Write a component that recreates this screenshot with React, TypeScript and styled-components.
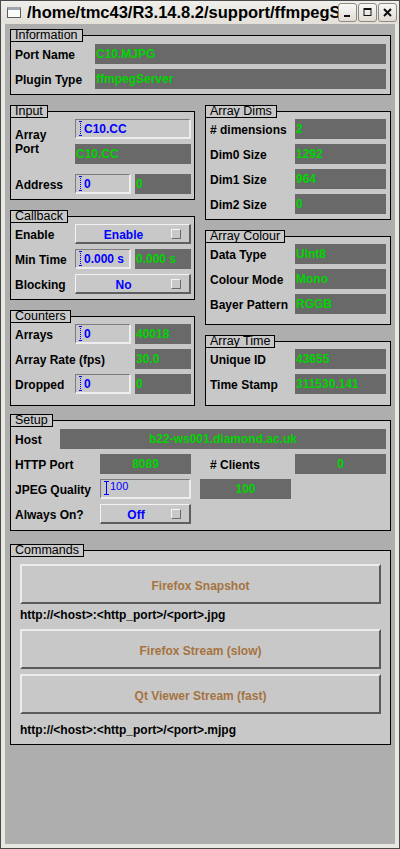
import styled, { createGlobalStyle } from "styled-components";

const GREEN = "#00d400";
const BLUE = "#0000ff";
const PANEL = "#c8c8c8";
const READOUT = "#696969";

const GlobalStyle = createGlobalStyle`
  html, body {
    margin: 0;
    padding: 0;
    background: #e9e7e1;
  }
  body {
    font-family: "Liberation Sans", Arial, sans-serif;
  }
`;

const Window = styled.div`
  box-sizing: border-box;
  width: 400px;
  height: 849px;
  border: 1px solid #4a4a4a;
  background: #e9e7e1;
  padding: 0 4px 4px 4px;
  display: flex;
  flex-direction: column;
`;

const TitleBar = styled.div`
  height: 23px;
  margin: 0 -4px;
  padding: 0 2px 0 6px;
  display: flex;
  align-items: center;
  background: linear-gradient(#efeeea, #e3e0d9);
`;

const TitleIcon = styled.div`
  box-sizing: border-box;
  width: 14px;
  height: 11px;
  margin-right: 6px;
  border: 1px solid #5c5c5c;
  border-top-width: 3px;
  border-top-color: #9fa6b0;
  background: #fafafa;
  flex: none;
`;

const Title = styled.div`
  flex: 1;
  min-width: 0;
  overflow: hidden;
  white-space: nowrap;
  font-weight: bold;
  font-size: 16.5px;
  color: #000;
`;

const WinButtons = styled.div`
  display: flex;
  gap: 1px;
  flex: none;
`;

const WinButton = styled.div`
  box-sizing: border-box;
  width: 19px;
  height: 19px;
  border: 1px solid #8e8a80;
  border-radius: 3px;
  background: linear-gradient(#f8f7f4, #e1ded6);
  display: flex;
  align-items: center;
  justify-content: center;
`;

const Content = styled.div`
  flex: 1;
  background: #aeaeae;
  padding: 5px 4px 0 5px;
  display: flex;
  flex-direction: column;
`;

const Group = styled.fieldset<{ $pt?: number; $pb?: number; $px?: number; $mt?: number }>`
  margin: ${(p) => p.$mt ?? 0}px 0 0 0;
  padding: ${(p) => p.$pt ?? 1}px ${(p) => p.$px ?? 4}px ${(p) => p.$pb ?? 5}px
    ${(p) => p.$px ?? 4}px;
  border: 1px solid #000;
  background: ${PANEL};
  min-width: 0;
`;

const Legend = styled.legend<{ $px?: number }>`
  box-sizing: border-box;
  height: 13px;
  margin-left: ${(p) => -((p.$px ?? 4) + 1)}px;
  padding: 0 4px;
  border: 1px solid #000;
  background: ${PANEL};
  font-size: 12.5px;
  line-height: 11px;
  color: #000;
`;

const Stack = styled.div<{ $gap?: number }>`
  display: flex;
  flex-direction: column;
  gap: ${(p) => p.$gap ?? 5}px;
`;

const Row = styled.div<{ $cols: string; $mt?: number; $rows?: string; $gap?: number }>`
  display: grid;
  grid-template-columns: ${(p) => p.$cols};
  grid-template-rows: ${(p) => p.$rows ?? "20px"};
  column-gap: ${(p) => p.$gap ?? 4}px;
  row-gap: 5px;
  align-items: center;
  margin-top: ${(p) => p.$mt ?? 0}px;
`;

const Label = styled.div<{ $span?: number; $indent?: number; $tall?: boolean }>`
  font-weight: bold;
  font-size: 12px;
  line-height: 14px;
  color: #000;
  white-space: nowrap;
  grid-column: span ${(p) => p.$span ?? 1};
  grid-row: span ${(p) => (p.$tall ? 2 : 1)};
  padding-left: ${(p) => p.$indent ?? 0}px;
  padding-top: 1px;
`;

const Readout = styled.div<{ $center?: boolean; $w?: number; $span?: number }>`
  box-sizing: border-box;
  height: 20px;
  width: ${(p) => (p.$w ? `${p.$w}px` : "auto")};
  grid-column: span ${(p) => p.$span ?? 1};
  background: ${READOUT};
  color: ${GREEN};
  font-weight: bold;
  font-size: 12px;
  line-height: 21px;
  padding: 0 1px;
  text-align: ${(p) => (p.$center ? "center" : "left")};
  white-space: nowrap;
  overflow: hidden;
`;

const Entry = styled.div<{ $w?: number; $span?: number; $plain?: boolean }>`
  box-sizing: border-box;
  height: 20px;
  width: ${(p) => (p.$w ? `${p.$w}px` : "auto")};
  grid-column: span ${(p) => p.$span ?? 1};
  background: ${PANEL};
  border-style: solid;
  border-width: 1px 2px 2px 1px;
  border-color: #7c7c7c #ededed #ededed #7c7c7c;
  padding-left: 3px;
  display: flex;
  align-items: ${(p) => (p.$plain ? "flex-start" : "center")};
  color: ${BLUE};
  font-weight: ${(p) => (p.$plain ? "normal" : "bold")};
  font-size: ${(p) => (p.$plain ? 11 : 12)}px;
  line-height: ${(p) => (p.$plain ? 13 : 14)}px;
  white-space: nowrap;
  overflow: hidden;
`;

const Toggle = styled.div<{ $w?: number; $span?: number }>`
  box-sizing: border-box;
  height: 20px;
  width: ${(p) => (p.$w ? `${p.$w}px` : "auto")};
  grid-column: span ${(p) => p.$span ?? 1};
  background: ${PANEL};
  border-style: solid;
  border-width: 1px 2px 2px 1px;
  border-color: #f2f2f2 #5e5e5e #5e5e5e #f2f2f2;
  display: flex;
  align-items: center;
`;

const ToggleText = styled.span`
  flex: 1;
  text-align: center;
  color: ${BLUE};
  font-weight: bold;
  font-size: 12px;
  padding-top: 2px;
`;

const Indicator = styled.span`
  box-sizing: border-box;
  width: 10px;
  height: 10px;
  margin-right: 8px;
  border: 1px solid;
  border-color: #f4f4f4 #6a6a6a #6a6a6a #f4f4f4;
`;

const Command = styled.div`
  box-sizing: border-box;
  height: 40px;
  padding-top: 3px;
  background: ${PANEL};
  border-style: solid;
  border-width: 2px;
  border-color: #ececec #5a5a5a #5a5a5a #ececec;
  display: flex;
  align-items: center;
  justify-content: center;
  color: #a5733f;
  font-weight: bold;
  font-size: 12px;
`;

const Url = styled.div<{ $mt: number; $mb: number }>`
  margin: ${(p) => p.$mt}px 0 ${(p) => p.$mb}px 0;
  font-weight: bold;
  font-size: 12px;
  line-height: 14px;
  color: #000;
`;

const TwoCol = styled.div`
  display: grid;
  grid-template-columns: 185px 186px;
  column-gap: 10px;
  margin-top: 10px;
  align-items: start;
`;

const Column = styled.div`
  display: flex;
  flex-direction: column;
  gap: 10px;
`;

const Caret = ({ solid }: { solid?: boolean }) =>
  solid ? (
    <svg width="5" height="14" viewBox="0 0 5 14" style={{ flex: "none", marginRight: 1, marginTop: 1 }}>
      <path d="M0 0.5H5M0 13.5H5M2.5 0V14" stroke={BLUE} strokeWidth="1" fill="none" />
    </svg>
  ) : (
    <svg width="4" height="15" viewBox="0 0 4 15" style={{ flex: "none", marginRight: 1 }}>
      <path d="M0 0.5H3M0 14.5H3M1.5 0V15" stroke={BLUE} strokeWidth="1" strokeDasharray="1 1" fill="none" />
    </svg>
  );

const INFO = "76px 291px";
const LEFT = "56px 56px 56px";
const RIGHT = "81px 91px";
const SETUP = "85px 100px 95px 91px";

export default function App() {
  return (
    <>
      <GlobalStyle />
      <Window>
        <TitleBar>
          <TitleIcon />
          <Title>/home/tmc43/R3.14.8.2/support/ffmpegServer/data/ffmpegServer.edl</Title>
          <WinButtons>
            <WinButton>
              <svg width="11" height="11" viewBox="0 0 11 11">
                <rect x="2" y="8" width="6" height="2" fill="#111" />
              </svg>
            </WinButton>
            <WinButton>
              <svg width="11" height="11" viewBox="0 0 11 11">
                <rect x="2" y="1.5" width="7" height="7" fill="none" stroke="#111" strokeWidth="1" />
                <rect x="2" y="1" width="7" height="2" fill="#111" />
              </svg>
            </WinButton>
            <WinButton>
              <svg width="11" height="11" viewBox="0 0 11 11">
                <path d="M2 2L9 9M9 2L2 9" stroke="#111" strokeWidth="2" />
              </svg>
            </WinButton>
          </WinButtons>
        </TitleBar>

        <Content>
          <Group $pt={2}>
            <Legend>Information</Legend>
            <Stack>
              <Row $cols={INFO}>
                <Label>Port Name</Label>
                <Readout>C10.MJPG</Readout>
              </Row>
              <Row $cols={INFO}>
                <Label>Plugin Type</Label>
                <Readout>ffmpegServer</Readout>
              </Row>
            </Stack>
          </Group>

          <TwoCol>
            <Column>
              <Group $pt={1}>
                <Legend>Input</Legend>
                <Stack>
                  <Row $cols={LEFT} $rows="20px 20px">
                    <Label $tall>
                      Array
                      <br />
                      Port
                    </Label>
                    <Entry $span={2}>
                      <Caret />
                      C10.CC
                    </Entry>
                    <Readout $span={2}>C10.CC</Readout>
                  </Row>
                  <Row $cols={LEFT} $mt={5}>
                    <Label>Address</Label>
                    <Entry>
                      <Caret />0
                    </Entry>
                    <Readout>0</Readout>
                  </Row>
                </Stack>
              </Group>

              <Group $pt={1} $pb={5}>
                <Legend>Callback</Legend>
                <Stack>
                  <Row $cols={LEFT}>
                    <Label>Enable</Label>
                    <Toggle $span={2}>
                      <ToggleText>Enable</ToggleText>
                      <Indicator />
                    </Toggle>
                  </Row>
                  <Row $cols={LEFT}>
                    <Label>Min Time</Label>
                    <Entry>
                      <Caret />
                      0.000 s
                    </Entry>
                    <Readout>0.000 s</Readout>
                  </Row>
                  <Row $cols={LEFT}>
                    <Label>Blocking</Label>
                    <Toggle $span={2}>
                      <ToggleText>No</ToggleText>
                      <Indicator />
                    </Toggle>
                  </Row>
                </Stack>
              </Group>

              <Group $pt={1} $pb={11}>
                <Legend>Counters</Legend>
                <Stack>
                  <Row $cols={LEFT}>
                    <Label>Arrays</Label>
                    <Entry>
                      <Caret />0
                    </Entry>
                    <Readout>40018</Readout>
                  </Row>
                  <Row $cols={LEFT}>
                    <Label $span={2}>Array Rate (fps)</Label>
                    <Readout>30.0</Readout>
                  </Row>
                  <Row $cols={LEFT}>
                    <Label>Dropped</Label>
                    <Entry>
                      <Caret />0
                    </Entry>
                    <Readout>0</Readout>
                  </Row>
                </Stack>
              </Group>
            </Column>

            <Column>
              <Group $pt={1}>
                <Legend>Array Dims</Legend>
                <Stack>
                  <Row $cols={RIGHT}>
                    <Label># dimensions</Label>
                    <Readout>2</Readout>
                  </Row>
                  <Row $cols={RIGHT}>
                    <Label>Dim0 Size</Label>
                    <Readout>1292</Readout>
                  </Row>
                  <Row $cols={RIGHT}>
                    <Label>Dim1 Size</Label>
                    <Readout>964</Readout>
                  </Row>
                  <Row $cols={RIGHT}>
                    <Label>Dim2 Size</Label>
                    <Readout>0</Readout>
                  </Row>
                </Stack>
              </Group>

              <Group $pt={1} $pb={10}>
                <Legend>Array Colour</Legend>
                <Stack>
                  <Row $cols={RIGHT}>
                    <Label>Data Type</Label>
                    <Readout>UInt8</Readout>
                  </Row>
                  <Row $cols={RIGHT}>
                    <Label>Colour Mode</Label>
                    <Readout>Mono</Readout>
                  </Row>
                  <Row $cols={RIGHT}>
                    <Label>Bayer Pattern</Label>
                    <Readout>RGGB</Readout>
                  </Row>
                </Stack>
              </Group>

              <Group $pt={1} $pb={11}>
                <Legend>Array Time</Legend>
                <Stack>
                  <Row $cols={RIGHT}>
                    <Label>Unique ID</Label>
                    <Readout>43655</Readout>
                  </Row>
                  <Row $cols={RIGHT}>
                    <Label>Time Stamp</Label>
                    <Readout>311530.141</Readout>
                  </Row>
                </Stack>
              </Group>
            </Column>
          </TwoCol>

          <Group $pt={2} $pb={6} $mt={8}>
            <Legend>Setup</Legend>
            <Stack>
              <Row $cols="41px 326px">
                <Label>Host</Label>
                <Readout $center>b22-ws001.diamond.ac.uk</Readout>
              </Row>
              <Row $cols={SETUP} $gap={0}>
                <Label>HTTP Port</Label>
                <Readout $center $w={91}>
                  8089
                </Readout>
                <Label $indent={10}># Clients</Label>
                <Readout $center>0</Readout>
              </Row>
              <Row $cols={SETUP} $gap={0}>
                <Label>JPEG Quality</Label>
                <Entry $w={91} $plain>
                  <Caret solid />
                  100
                </Entry>
                <Readout $center $w={91}>
                  100
                </Readout>
              </Row>
              <Row $cols={SETUP} $gap={0}>
                <Label>Always On?</Label>
                <Toggle $w={91}>
                  <ToggleText>Off</ToggleText>
                  <Indicator />
                </Toggle>
              </Row>
            </Stack>
          </Group>

          <Group $pt={7} $pb={7} $px={9} $mt={13}>
            <Legend $px={9}>Commands</Legend>
            <Command>Firefox Snapshot</Command>
            <Url $mt={4} $mb={7}>
              http://&lt;host&gt;:&lt;http_port&gt;/&lt;port&gt;.jpg
            </Url>
            <Stack>
              <Command>Firefox Stream (slow)</Command>
              <Command>Qt Viewer Stream (fast)</Command>
            </Stack>
            <Url $mt={9} $mb={0}>
              http://&lt;host&gt;:&lt;http_port&gt;/&lt;port&gt;.mjpg
            </Url>
          </Group>
        </Content>
      </Window>
    </>
  );
}
